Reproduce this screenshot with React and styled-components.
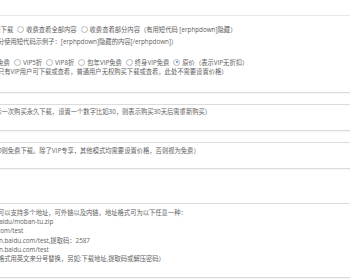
import React from 'react';
import styled, { createGlobalStyle, css } from 'styled-components';

const GlobalStyle = createGlobalStyle`
  html,
  body {
    margin: 0;
    padding: 0;
    background: #fff;
  }

  body {
    width: 350px;
    height: 280px;
    overflow: hidden;
    font-family: 'Open Sans', 'Noto Sans CJK SC', sans-serif;
    -webkit-font-smoothing: antialiased;
  }
`;

// the label column sits left of the visible area, only the fields show
const StyledMetaBox = styled.div`
  width: 760px;
  margin-left: -191px;
`;

const MetaHead = styled.div`
  height: 15px;
  border-bottom: 1px solid #e8e8e8;
`;

const Row = styled.div`
  display: flex;
  padding-top: ${({ $gap }) => $gap}px;
`;

const Label = styled.div`
  flex: 0 0 170px;
  font-size: 6.3px;
  line-height: 12px;
  color: #333;
`;

const Field = styled.div`
  flex: 1;
  min-width: 0;
`;

const Choices = styled.div`
  display: flex;
  align-items: center;
  height: ${({ $h }) => $h}px;
  white-space: nowrap;
  font-size: 6.3px;
  color: #5c5c5c;
`;

const Choice = styled.label`
  display: inline-flex;
  align-items: center;
  margin-right: 4px;
`;

const Radio = styled.span`
  position: relative;
  flex: none;
  box-sizing: border-box;
  width: 7px;
  height: 7px;
  margin-right: 2px;
  border: 1px solid #b8b8b8;
  border-radius: 50%;
  background: #fff;

  ${({ $on }) =>
    $on &&
    css`
      &:after {
        content: '';
        position: absolute;
        inset: 1.2px;
        border-radius: 50%;
        background: #4a8fc4;
      }
    `}
`;

const Desc = styled.p`
  margin: ${({ $mt }) => $mt || 0}px 0 0;
  font-size: 6.3px;
  line-height: ${({ $lh }) => $lh}px;
  color: #626262;
  white-space: nowrap;
`;

const TextInput = styled.input`
  display: block;
  box-sizing: border-box;
  width: 100%;
  height: 13px;
  margin: 0;
  padding: 0 3px;
  border: 1px solid #dcdcdc;
  border-radius: 0;
  box-shadow: inset 0 1px 1px rgba(0, 0, 0, 0.04);
  background: #fff;
  font-size: 6.3px;
`;

const TextArea = styled.textarea`
  display: block;
  box-sizing: border-box;
  width: 100%;
  height: 36px;
  margin: 0;
  padding: 2px 3px;
  border: 1px solid #dcdcdc;
  border-radius: 0;
  box-shadow: inset 0 1px 1px rgba(0, 0, 0, 0.04);
  background: #fff;
  resize: none;
  font-size: 6.3px;
`;

const RadioRow = ({ options, checked, h }) => (
  <Choices $h={h}>
    {options.map((opt) => (
      <Choice key={opt}>
        <Radio $on={opt === checked} />
        {opt}
      </Choice>
    ))}
  </Choices>
);

const App = () => {
  const types = ['收费下载', '收费查看全部内容', '收费查看部分内容（有用短代码 [erphpdown]隐藏）'];
  const vips = ['VIP免费', 'VIP5折', 'VIP8折', '包年VIP免费', '终身VIP免费', '原价（表示VIP无折扣）'];

  const addressHelp = [
    '（这里可以支持多个地址，可外链以及内链。地址格式可为以下任意一种：',
    'www.baidu/moban-tu.zip',
    'baidu.com/test',
    '盘：pan.baidu.com/test,提取码：2587',
    '盘：pan.baidu.com/test',
    '（地址格式用英文来分号替换，另如:下载地址,提取码或解压密码）',
  ];

  return (
    <>
      <GlobalStyle />
      <StyledMetaBox>
        <MetaHead />

        <Row $gap={7}>
          <Label>收费模式</Label>
          <Field>
            <RadioRow options={types} checked={null} h={13} />
            <Desc $lh={12}>注：部分使用短代码示例子：[erphpdown]隐藏的内容[/erphpdown]）</Desc>
          </Field>
        </Row>

        <Row $gap={9}>
          <Label>VIP优惠</Label>
          <Field>
            <RadioRow options={vips} checked="原价（表示VIP无折扣）" h={10} />
            <Desc $lh={10}>（专享只有VIP用户可下载或查看，普通用户无权购买下载或查看，此处不需要设置价格）</Desc>
          </Field>
        </Row>

        <Row $gap={15}>
          <Label>有效期（天）</Label>
          <Field>
            <TextInput readOnly defaultValue="" />
            <Desc $mt={2} $lh={10}>（0表示一次购买永久下载，设置一个数字比如30，则表示购买30天后需重新购买）</Desc>
          </Field>
        </Row>

        <Row $gap={13}>
          <Label>价格</Label>
          <Field>
            <TextInput readOnly defaultValue="" />
            <Desc $mt={3} $lh={10}>（设为0则免费下载。除了VIP专享，其他模式均需要设置价格，否则视为免费）</Desc>
          </Field>
        </Row>

        <Row $gap={12}>
          <Label>下载地址</Label>
          <Field>
            <TextArea readOnly defaultValue="" />
            {addressHelp.map((line, i) => (
              <Desc key={i} $mt={i === 0 ? 4 : 0} $lh={9.2}>
                {line}
              </Desc>
            ))}
          </Field>
        </Row>

        <Row $gap={13.5}>
          <Label>提取码</Label>
          <Field>
            <TextInput readOnly defaultValue="" />
          </Field>
        </Row>
      </StyledMetaBox>
    </>
  );
};

export default App;
